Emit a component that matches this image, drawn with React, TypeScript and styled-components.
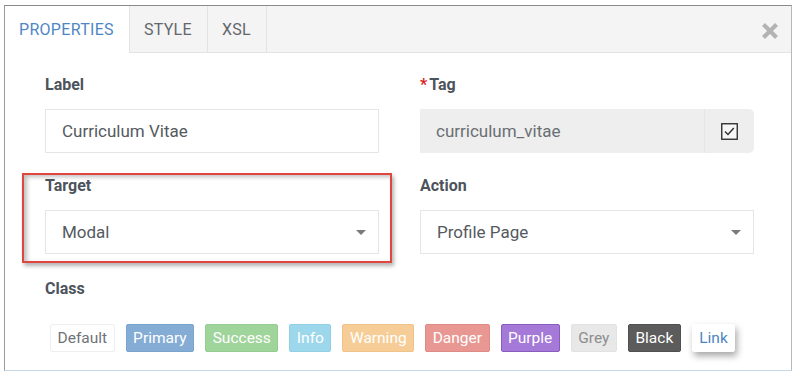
import React from 'react';
import styled, { createGlobalStyle } from 'styled-components';

const GlobalStyle = createGlobalStyle`
  html, body {
    margin: 0;
    padding: 0;
    background: #ffffff;
    font-family: Roboto, "Liberation Sans", Arial, sans-serif;
  }
`;

const Page = styled.div`
  width: 801px;
  height: 376px;
  padding: 5px 0 0 4px;
  box-sizing: border-box;
`;

const Dialog = styled.div`
  width: 788px;
  height: 366px;
  box-sizing: border-box;
  border-top: 1px solid #8a8a8a;
  border-left: 1px solid #9a9a9a;
  border-right: 1px solid #b8b8b8;
  border-bottom: 1px solid #c9d8e8;
  background: #fff;
  display: flex;
  flex-direction: column;
`;

const TabBar = styled.div`
  display: flex;
  align-items: stretch;
  height: 47px;
  background: #f4f4f4;
  border-bottom: 1px solid #e3e3e3;
  box-sizing: border-box;
`;

const Tab = styled.div<{ $active?: boolean }>`
  display: flex;
  align-items: center;
  padding: 0 15px 0 14px;
  font-size: 16px;
  letter-spacing: 0.3px;
  color: ${(p) => (p.$active ? '#4f87c4' : '#63676c')};
  background: ${(p) => (p.$active ? '#ffffff' : 'transparent')};
  border-right: 1px solid #e3e3e3;
  margin-bottom: ${(p) => (p.$active ? '-1px' : '0')};
`;

const Spacer = styled.div`
  flex: 1;
`;

const CloseButton = styled.div`
  display: flex;
  align-items: center;
  padding: 4px 11px 0 0;
`;

const Body = styled.div`
  padding: 22px 36px 0 40px;
  display: grid;
  grid-template-columns: 334px 334px;
  column-gap: 41px;
  row-gap: 23px;
`;

const Field = styled.div`
  position: relative;
  display: flex;
  flex-direction: column;
`;

const Label = styled.div`
  height: 20px;
  line-height: 20px;
  font-size: 16px;
  font-weight: 700;
  color: #4d535b;
  margin-bottom: 14px;
  display: flex;
  align-items: center;
`;

const Required = styled.span`
  color: #d9231f;
  margin-right: 2px;
  font-size: 16px;
`;

const Input = styled.div`
  height: 44px;
  box-sizing: border-box;
  border: 1px solid #e6e6e6;
  padding: 0 16px;
  display: flex;
  align-items: center;
  font-size: 17px;
  color: #555a60;
`;

const AddonGroup = styled.div`
  height: 44px;
  display: flex;
  background: #eeeeee;
  border-radius: 0 5px 5px 0;
`;

const ReadonlyInput = styled.div`
  flex: 1;
  display: flex;
  align-items: center;
  padding: 0 16px;
  font-size: 17px;
  color: #6a6e73;
  border-right: 1px solid #e6e6e6;
`;

const Addon = styled.div`
  width: 49px;
  display: flex;
  align-items: center;
  justify-content: center;
`;

const Select = styled(Input)`
  justify-content: space-between;
  padding-right: 12px;
`;

const Caret = styled.span`
  width: 0;
  height: 0;
  border-left: 5px solid transparent;
  border-right: 5px solid transparent;
  border-top: 5px solid #7a7a7a;
`;

const Highlight = styled.div`
  position: absolute;
  left: -23px;
  top: -3px;
  right: -13px;
  bottom: -9px;
  border: 2px solid #e0453f;
  box-shadow: 2px 3px 4px rgba(0, 0, 0, 0.3), inset 3px 2px 4px rgba(0, 0, 0, 0.25);
  pointer-events: none;
`;

const ClassField = styled.div`
  grid-column: 1 / span 2;
  display: flex;
  flex-direction: column;
  margin-top: 2px;
`;

const ButtonRow = styled.div`
  display: flex;
  gap: 11px;
  padding: 11px 0 0 5px;
`;

const variants: Record<string, { bg: string; fg: string; border: string; shadow?: string }> = {
  Default: { bg: '#ffffff', fg: '#6f7378', border: '#eeeeee' },
  Primary: { bg: '#84acd5', fg: '#ffffff', border: '#7aa3cd' },
  Success: { bg: '#9fd49b', fg: '#ffffff', border: '#95cc91' },
  Info: { bg: '#9dd7ec', fg: '#ffffff', border: '#92cfe6' },
  Warning: { bg: '#f6cd96', fg: '#ffffff', border: '#f1c388' },
  Danger: { bg: '#e89792', fg: '#ffffff', border: '#e08a85' },
  Purple: { bg: '#a479d8', fg: '#ffffff', border: '#8a5cc0' },
  Grey: { bg: '#e8e8e8', fg: '#8d8d8d', border: '#e2e2e2' },
  Black: { bg: '#5c5c5c', fg: '#ffffff', border: '#505050' },
  Link: { bg: '#ffffff', fg: '#4a86c4', border: '#ffffff', shadow: '2px 4px 7px rgba(0,0,0,0.35)' },
};

const ClassButton = styled.div<{ $v: string }>`
  height: 28px;
  box-sizing: border-box;
  padding: 0 6.5px;
  display: flex;
  align-items: center;
  font-size: 15.5px;
  border-radius: 2px;
  background: ${(p) => variants[p.$v].bg};
  color: ${(p) => variants[p.$v].fg};
  border: 1px solid ${(p) => variants[p.$v].border};
  box-shadow: ${(p) => variants[p.$v].shadow || 'none'};
`;

const CloseIcon = () => (
  <svg width="20" height="20" viewBox="0 0 20 20">
    <path d="M3.5 3.5 L16.5 16.5 M16.5 3.5 L3.5 16.5" stroke="#b3b3b3" strokeWidth="4.2" strokeLinecap="butt" />
  </svg>
);

const CheckIcon = () => (
  <svg width="17" height="17" viewBox="0 0 17 17">
    <rect x="0.75" y="0.75" width="15.5" height="15.5" fill="#f7f7f7" stroke="#333" strokeWidth="1.4" />
    <path d="M4 8.5 L7 11.5 L12.8 5" fill="none" stroke="#333" strokeWidth="1.5" />
  </svg>
);

const classes = ['Default', 'Primary', 'Success', 'Info', 'Warning', 'Danger', 'Purple', 'Grey', 'Black', 'Link'];

export default function App() {
  return (
    <Page>
      <GlobalStyle />
      <Dialog>
        <TabBar>
          <Tab $active>PROPERTIES</Tab>
          <Tab>STYLE</Tab>
          <Tab>XSL</Tab>
          <Spacer />
          <CloseButton>
            <CloseIcon />
          </CloseButton>
        </TabBar>
        <Body>
          <Field>
            <Label>Label</Label>
            <Input>Curriculum Vitae</Input>
          </Field>
          <Field>
            <Label>
              <Required>*</Required>Tag
            </Label>
            <AddonGroup>
              <ReadonlyInput>curriculum_vitae</ReadonlyInput>
              <Addon>
                <CheckIcon />
              </Addon>
            </AddonGroup>
          </Field>
          <Field>
            <Label>Target</Label>
            <Select>
              Modal
              <Caret />
            </Select>
            <Highlight />
          </Field>
          <Field>
            <Label>Action</Label>
            <Select>
              Profile Page
              <Caret />
            </Select>
          </Field>
          <ClassField>
            <Label>Class</Label>
            <ButtonRow>
              {classes.map((c) => (
                <ClassButton key={c} $v={c}>
                  {c}
                </ClassButton>
              ))}
            </ButtonRow>
          </ClassField>
        </Body>
      </Dialog>
    </Page>
  );
}
